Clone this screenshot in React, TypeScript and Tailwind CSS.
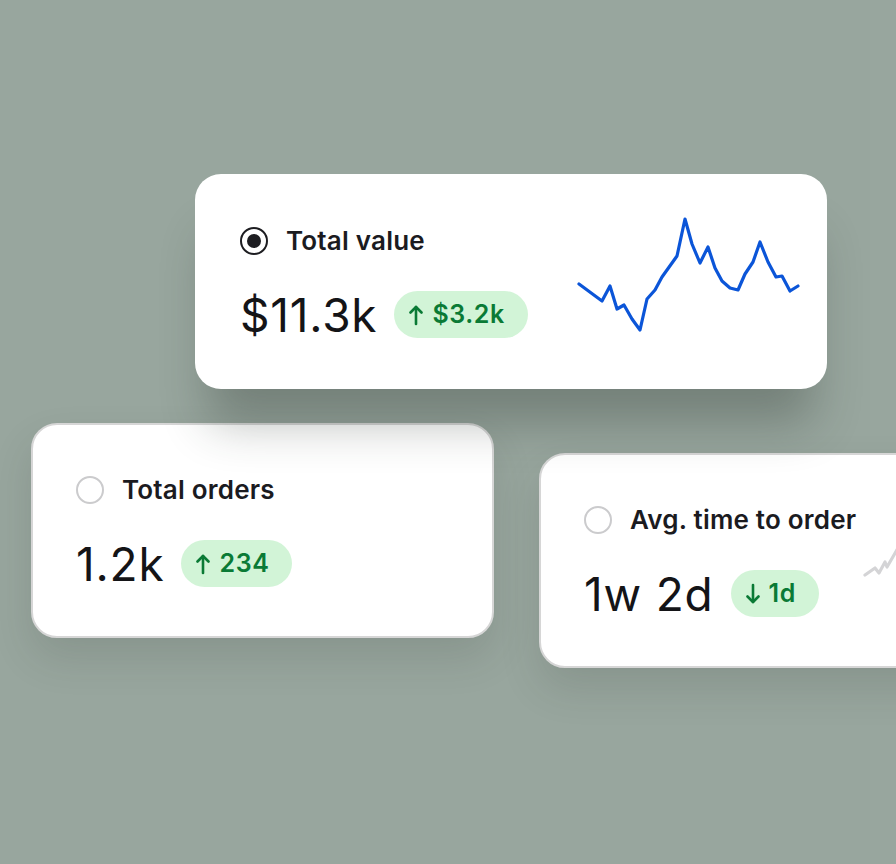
import { FC, ReactNode } from "react";

interface StatCardProps {
  title: string;
  value: string;
  delta: string;
  up?: boolean;
  selected?: boolean;
  bordered?: boolean;
  className?: string;
  chart?: ReactNode;
}

const Arrow: FC<{ up?: boolean }> = ({ up = true }) => (
  <svg
    width="14"
    height="22"
    viewBox="0 0 14 22"
    fill="none"
    stroke="currentColor"
    strokeWidth="2.6"
    strokeLinecap="round"
    strokeLinejoin="round"
    className={up ? "" : "rotate-180"}
  >
    <path d="M7 20V3" />
    <path d="M1.5 8.5L7 3l5.5 5.5" />
  </svg>
);

const Radio: FC<{ selected?: boolean }> = ({ selected }) =>
  selected ? (
    <div className="flex h-7 w-7 shrink-0 items-center justify-center rounded-full border-[2.5px] border-[#1d1d21]">
      <div className="h-[14px] w-[14px] rounded-full bg-[#1d1d21]" />
    </div>
  ) : (
    <div className="h-7 w-7 shrink-0 rounded-full border-2 border-[#cbcbcd]" />
  );

const StatCard: FC<StatCardProps> = ({
  title,
  value,
  delta,
  up = true,
  selected,
  bordered,
  className,
  chart,
}) => (
  <div
    className={`flex h-[215px] shrink-0 items-start rounded-[26px] bg-white ${
      bordered ? "border-2 border-[#d6d6d6] pr-[15px]" : "pr-[17px]"
    } ${className}`}
  >
    <div
      className={`flex flex-col ${
        bordered ? "pl-[43px] pt-[51px]" : "pl-[45px] pt-[53px]"
      }`}
    >
      <div className="flex h-7 items-center gap-[18px]">
        <Radio selected={selected} />
        <span className="whitespace-nowrap text-[26px] font-semibold leading-7 tracking-[0.2px] text-[#1b1b1f]">
          {title}
        </span>
      </div>
      <div className="mt-[36px] flex h-[47px] items-center gap-[17px]">
        <span className="whitespace-nowrap text-[46px] font-normal leading-none tracking-[0.8px] text-[#141417]">
          {value}
        </span>
        <div className="flex h-[47px] items-center gap-[9px] rounded-full bg-[#d2f4d7] pl-[15px] pr-[23px] text-[#0a7a35]">
          <Arrow up={up} />
          <span className="whitespace-nowrap text-[25px] font-semibold leading-none tracking-[0.6px]">
            {delta}
          </span>
        </div>
      </div>
    </div>
    {chart && (
      <div className={`ml-auto shrink-0 ${bordered ? "mt-[34px]" : "mt-[36px]"}`}>
        {chart}
      </div>
    )}
  </div>
);

const valuePoints =
  "9,74 32,91 40,76 47,99 54,95 62,109 70,120 77,89 85,80 92,67 107,46 115,9 122,34 130,53 138,37 145,58 152,71 160,78 168,80 175,64 183,52 190,32 198,52 206,67 212,66 220,81 228,76";

const timePoints =
  "9,86 19,79 23,84 29,73 31,78 38,66 46,52 53,60 61,34 68,46 76,40 84,58 92,50 100,70";

export default function App() {
  return (
    <div
      className="h-[864px] w-[896px] overflow-hidden bg-[#98a69e] pt-[174px]"
      style={{ fontFamily: "Inter, 'Noto Sans', sans-serif" }}
    >
      <StatCard
        title="Total value"
        value="$11.3k"
        delta="$3.2k"
        selected
        className="relative z-10 ml-[195px] w-[632px] shadow-[0_48px_48px_-14px_rgba(40,50,45,0.32)]"
        chart={
          <svg width="240" height="130" viewBox="0 0 240 130" fill="none">
            <polyline
              points={valuePoints}
              stroke="#0b55d8"
              strokeWidth="3.2"
              strokeLinejoin="round"
              strokeLinecap="round"
            />
          </svg>
        }
      />
      <div className="mt-[34px] flex items-start">
        <StatCard
          title="Total orders"
          value="1.2k"
          delta="234"
          bordered
          className="ml-[31px] w-[463px] shadow-[0_20px_40px_rgba(40,50,45,0.14)]"
        />
        <StatCard
          title="Avg. time to order"
          value="1w 2d"
          delta="1d"
          up={false}
          bordered
          className="ml-[45px] mt-[30px] w-[632px] shadow-[0_20px_40px_rgba(40,50,45,0.14)]"
          chart={
            <svg width="299" height="130" viewBox="0 0 299 130" fill="none">
              <polyline
                points={timePoints}
                stroke="#d4d4d6"
                strokeWidth="3.2"
                strokeLinejoin="round"
                strokeLinecap="round"
              />
            </svg>
          }
        />
      </div>
    </div>
  );
}
